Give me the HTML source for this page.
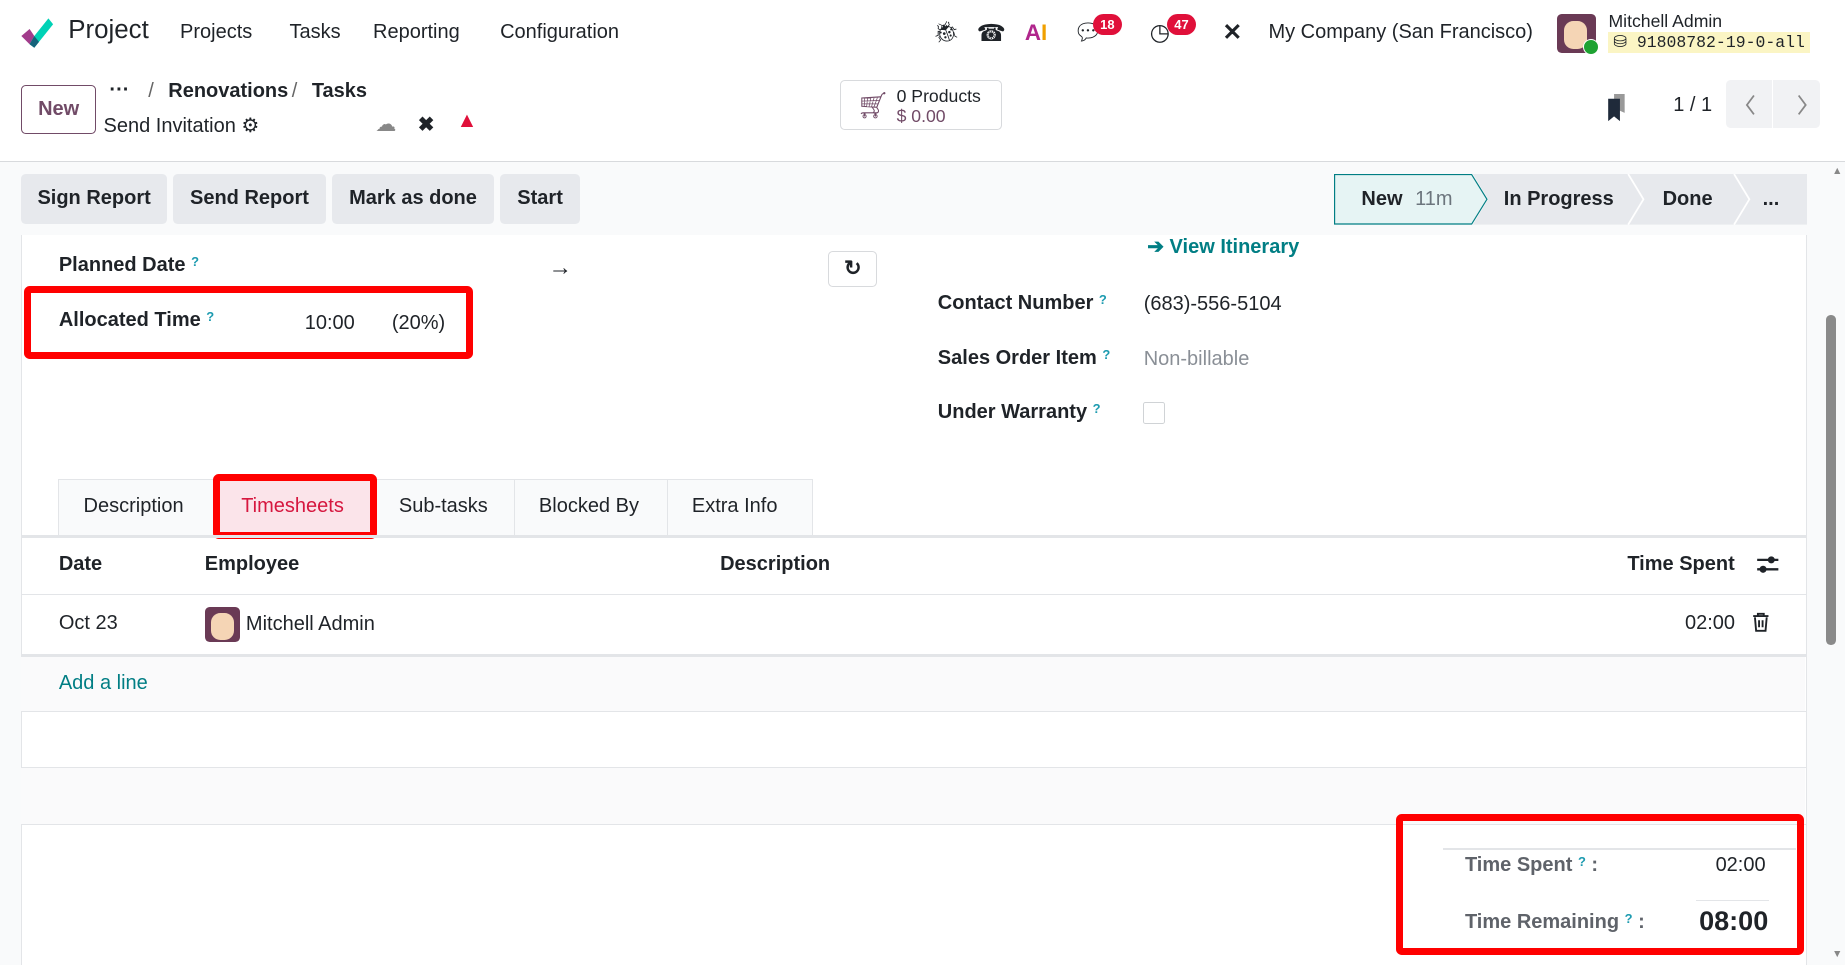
<!DOCTYPE html>
<html><head><meta charset="utf-8"><style>
html,body{margin:0;padding:0;}
body{width:1568px;height:820px;zoom:1.17666;overflow:hidden;position:relative;background:#f9fafb;font-family:"Liberation Sans",sans-serif;color:#1f2328;font-size:17px;}
.a{position:absolute;white-space:nowrap;}
.b{font-weight:bold;}
.btn{position:absolute;top:148px;height:42px;background:#e7e9ed;border-radius:4px;line-height:42px;text-align:center;font-weight:bold;font-size:17px;color:#1f2328;}
.q{color:#1d9bb0;font-size:11px;vertical-align:top;font-weight:bold;}
.red{position:absolute;border:6px solid #f00;border-radius:5px;box-sizing:border-box;}
.hl{position:absolute;left:18px;width:1517px;height:1px;background:#e3e5e8;}
.badge{position:absolute;background:#e0103a;color:#fff;font-size:11px;font-weight:bold;border-radius:9px;height:18px;line-height:18px;padding:0 6px;}
</style></head><body>
<div class="a" style="left:0;top:0;width:1568px;height:57px;background:#fff"></div>
<svg class="a" style="left:16px;top:14px" width="30" height="28" viewBox="0 0 30 28"><path d="M2 17 L9 11 L13 17 L9 24Z" fill="#a23c8b"/><path d="M9 24 L13 17 L25 2 L29 7 L13 27Z" fill="#00d2b6"/><path d="M9 24 L13 17 L17 22 L13 27Z" fill="#15627a"/></svg>
<div class="a" style="left:58px;top:14px;font-size:22px">Project</div>
<div class="a" style="left:153px;top:18px">Projects</div>
<div class="a" style="left:246px;top:18px">Tasks</div>
<div class="a" style="left:317px;top:18px">Reporting</div>
<div class="a" style="left:425px;top:18px">Configuration</div>
<div class="a" style="left:793px;top:17px;font-size:18px">🐞︎</div>
<div class="a" style="left:830px;top:16px;font-size:20px">☎</div>
<div class="a b" style="left:871px;top:17px;font-size:19px;color:#b0268c">A<span style="color:#f0a000">I</span></div>
<div class="a" style="left:912px;top:15px;font-size:20px">💬︎</div>
<div class="badge" style="left:929px;top:12px">18</div>
<div class="a" style="left:977px;top:15px;font-size:20px">◷</div>
<div class="badge" style="left:992px;top:12px">47</div>
<div class="a b" style="left:1039px;top:15px;font-size:20px">✕</div>
<div class="a" style="left:1078px;top:18px">My Company (San Francisco)</div>
<div class="a" style="left:1323px;top:12px;width:33px;height:33px;background:#6a3a55;border-radius:4px"></div>
<div class="a" style="left:1329px;top:18px;width:20px;height:24px;background:#f5d5b5;border-radius:8px"></div>
<div class="a" style="left:1345px;top:33px;width:12px;height:12px;background:#1ea232;border-radius:50%;border:1px solid #fff"></div>
<div class="a" style="left:1367px;top:9px;font-size:15px">Mitchell Admin</div>
<div class="a" style="left:1367px;top:27px;height:18px;background:#fbf5c4;font-family:'Liberation Mono',monospace;font-size:14px;line-height:18px;padding:0 4px">⛁ 91808782-19-0-all</div>
<div class="a" style="left:0;top:57px;width:1568px;height:80px;background:#fff;border-bottom:1px solid #d8dadd"></div>
<div class="a" style="left:18px;top:72px;width:62px;height:40px;border:1px solid #714b67;border-radius:4px;color:#714b67;font-weight:bold;line-height:40px;text-align:center">New</div>
<div class="a b" style="left:93px;top:67px">···</div>
<div class="a" style="left:126px;top:68px;color:#666">/</div>
<div class="a b" style="left:143px;top:68px">Renovations</div>
<div class="a" style="left:248px;top:68px;color:#666">/</div>
<div class="a b" style="left:265px;top:68px">Tasks</div>
<div class="a" style="left:88px;top:96px">Send Invitation <span style="font-size:17px">⚙</span></div>
<div class="a" style="left:319px;top:94px;color:#888;font-size:18px">☁</div>
<div class="a b" style="left:355px;top:95px;font-size:17px">✖</div>
<div class="a" style="left:388px;top:93px;color:#e0103a;font-size:18px">▲</div>
<div class="a" style="left:714px;top:68px;width:136px;height:41px;border:1px solid #d8dadd;border-radius:4px;background:#fff"></div>
<div class="a" style="left:728px;top:77px;font-size:22px;color:#714b67">🛒︎</div>
<div class="a" style="left:762px;top:73px;font-size:15px">0 Products</div>
<div class="a" style="left:762px;top:90px;font-size:15px;color:#714b67">$ 0.00</div>
<svg class="a" style="left:1366px;top:80px" width="18" height="24"><path d="M6 0H15V16L6 12Z" fill="#999"/><path d="M1 4H11V23L6 19L1 23Z" fill="#1f2a3a"/></svg>
<div class="a" style="left:1422px;top:80px">1 / 1</div>
<div class="a" style="left:1467px;top:68px;width:80px;height:41px;background:#f1f2f4;border-radius:4px"></div>
<div class="a" style="left:1506px;top:68px;width:1px;height:41px;background:#fff"></div>
<svg class="a" style="left:1480px;top:78px" width="60" height="22"><path d="M11 3L5 11L11 19M49 3L55 11L49 19" fill="none" stroke="#888" stroke-width="1.5"/></svg>
<div class="btn" style="left:18px;width:124px">Sign Report</div>
<div class="btn" style="left:147px;width:130px">Send Report</div>
<div class="btn" style="left:282px;width:138px">Mark as done</div>
<div class="btn" style="left:425px;width:68px">Start</div>
<svg class="a" style="left:1134px;top:148px" width="402" height="43"><path d="M0.5 0.5H117L130 21.5L117 42.5H0.5Z" fill="#e6f4f4" stroke="#017e84"/><path d="M118 0H402V43H118L131 21.5Z" fill="#e7e9ed"/><path d="M250 0L263 21.5L250 43M340 0L353 21.5L340 43" fill="none" stroke="#fff" stroke-width="1.5"/></svg>
<div class="a b" style="left:1157px;top:160px">New <span style="color:#6c757d;font-weight:normal;margin-left:6px">11m</span></div>
<div class="a b" style="left:1278px;top:160px">In Progress</div>
<div class="a b" style="left:1413px;top:160px">Done</div>
<div class="a b" style="left:1498px;top:160px">...</div>
<div class="a" style="left:18px;top:200px;width:1516px;height:620px;background:#fff;border-left:1px solid #e3e5e8;border-right:1px solid #e3e5e8"></div>
<div class="a" style="left:1552px;top:268px;width:8px;height:280px;background:#8a8a8a;border-radius:4px"></div>
<div class="a" style="left:1557px;top:140px;font-size:9px;color:#888">▲</div>
<div class="a" style="left:1557px;top:806px;font-size:9px;color:#888">▼</div>
<div class="a b" style="left:50px;top:216px">Planned Date <span class="q">?</span></div>
<div class="a b" style="left:466px;top:216px;font-size:20px">→</div>
<div class="a" style="left:704px;top:213px;width:40px;height:29px;border:1px solid #d8dadd;border-radius:4px;text-align:center;line-height:29px;font-weight:bold;font-size:18px">↻</div>
<div class="a b" style="left:50px;top:263px">Allocated Time <span class="q">?</span></div>
<div class="a" style="left:259px;top:265px">10:00</div>
<div class="a" style="left:333px;top:265px">(20%)</div>
<div class="red" style="left:20px;top:243px;width:382px;height:62px"></div>
<div class="a b" style="left:975px;top:199px;color:#017e84">➔ View Itinerary</div>
<div class="a b" style="left:797px;top:248px">Contact Number <span class="q">?</span></div>
<div class="a" style="left:972px;top:249px">(683)-556-5104</div>
<div class="a b" style="left:797px;top:295px">Sales Order Item <span class="q">?</span></div>
<div class="a" style="left:972px;top:296px;color:#8a8f96">Non-billable</div>
<div class="a b" style="left:797px;top:341px">Under Warranty <span class="q">?</span></div>
<div class="a" style="left:971px;top:342px;width:17px;height:17px;border:1px solid #d0d3d6;border-radius:2px"></div>
<div class="a" style="left:49px;top:407px;width:640px;height:48px;background:#f9fafb;border:1px solid #e3e5e8;border-bottom:none"></div>
<div class="a" style="left:437px;top:407px;width:1px;height:48px;background:#e3e5e8"></div>
<div class="a" style="left:567px;top:407px;width:1px;height:48px;background:#e3e5e8"></div>
<div class="a" style="left:71px;top:421px">Description</div>
<div class="a" style="left:184px;top:407px;width:132px;height:48px;background:#fbe4ea"></div>
<div class="a" style="left:205px;top:421px;color:#d6173f">Timesheets</div>
<div class="a" style="left:339px;top:421px">Sub-tasks</div>
<div class="a" style="left:458px;top:421px">Blocked By</div>
<div class="a" style="left:588px;top:421px">Extra Info</div>
<div class="red" style="left:181px;top:403px;width:139px;height:55px"></div>
<div class="hl" style="top:455px;height:2px"></div>
<div class="a b" style="left:50px;top:470px">Date</div>
<div class="a b" style="left:174px;top:470px">Employee</div>
<div class="a b" style="left:612px;top:470px">Description</div>
<div class="a b" style="left:1383px;top:470px">Time Spent</div>
<svg class="a" style="left:1492px;top:471px" width="20" height="18"><path d="M1 5H19M1 13H19" stroke="#1f2328" stroke-width="2"/><circle cx="13" cy="5" r="3" fill="#1f2328"/><circle cx="6" cy="13" r="3" fill="#1f2328"/></svg>
<div class="hl" style="top:505px"></div>
<div class="a" style="left:50px;top:520px">Oct 23</div>
<div class="a" style="left:174px;top:516px;width:30px;height:30px;background:#6a3a55;border-radius:4px"></div>
<div class="a" style="left:179px;top:521px;width:20px;height:23px;background:#f5d5b5;border-radius:8px"></div>
<div class="a" style="left:209px;top:521px">Mitchell Admin</div>
<div class="a" style="left:1432px;top:520px">02:00</div>
<svg class="a" style="left:1489px;top:520px" width="15" height="17"><path d="M1 3.5H14M5 3.5V1.5H10V3.5M2.5 4.5L3.5 16H11.5L12.5 4.5M6 7V13M9 7V13" fill="none" stroke="#1f2328" stroke-width="1.6"/></svg>
<div class="a" style="left:18px;top:556px;width:1516px;height:48px;background:#fafafb"></div>
<div class="hl" style="top:556px;height:2px"></div>
<div class="a" style="left:50px;top:571px;color:#017e84">Add a line</div>
<div class="hl" style="top:604px"></div>
<div class="a" style="left:18px;top:652px;width:1516px;height:48px;background:#fafafb"></div>
<div class="hl" style="top:652px"></div>
<div class="hl" style="top:700px"></div>
<div class="a" style="left:1226px;top:721px;width:300px;height:1px;background:#e3e5e8"></div>
<div class="a b" style="left:1245px;top:726px;color:#5f636a">Time Spent <span class="q">?</span> :</div>
<div class="a" style="left:1458px;top:726px">02:00</div>
<div class="a" style="left:1441px;top:765px;width:62px;height:1px;background:#e3e5e8"></div>
<div class="a b" style="left:1245px;top:774px;color:#5f636a">Time Remaining <span class="q">?</span> :</div>
<div class="a b" style="left:1444px;top:770px;font-size:23px">08:00</div>
<div class="red" style="left:1186px;top:692px;width:347px;height:120px"></div>
</body></html>
